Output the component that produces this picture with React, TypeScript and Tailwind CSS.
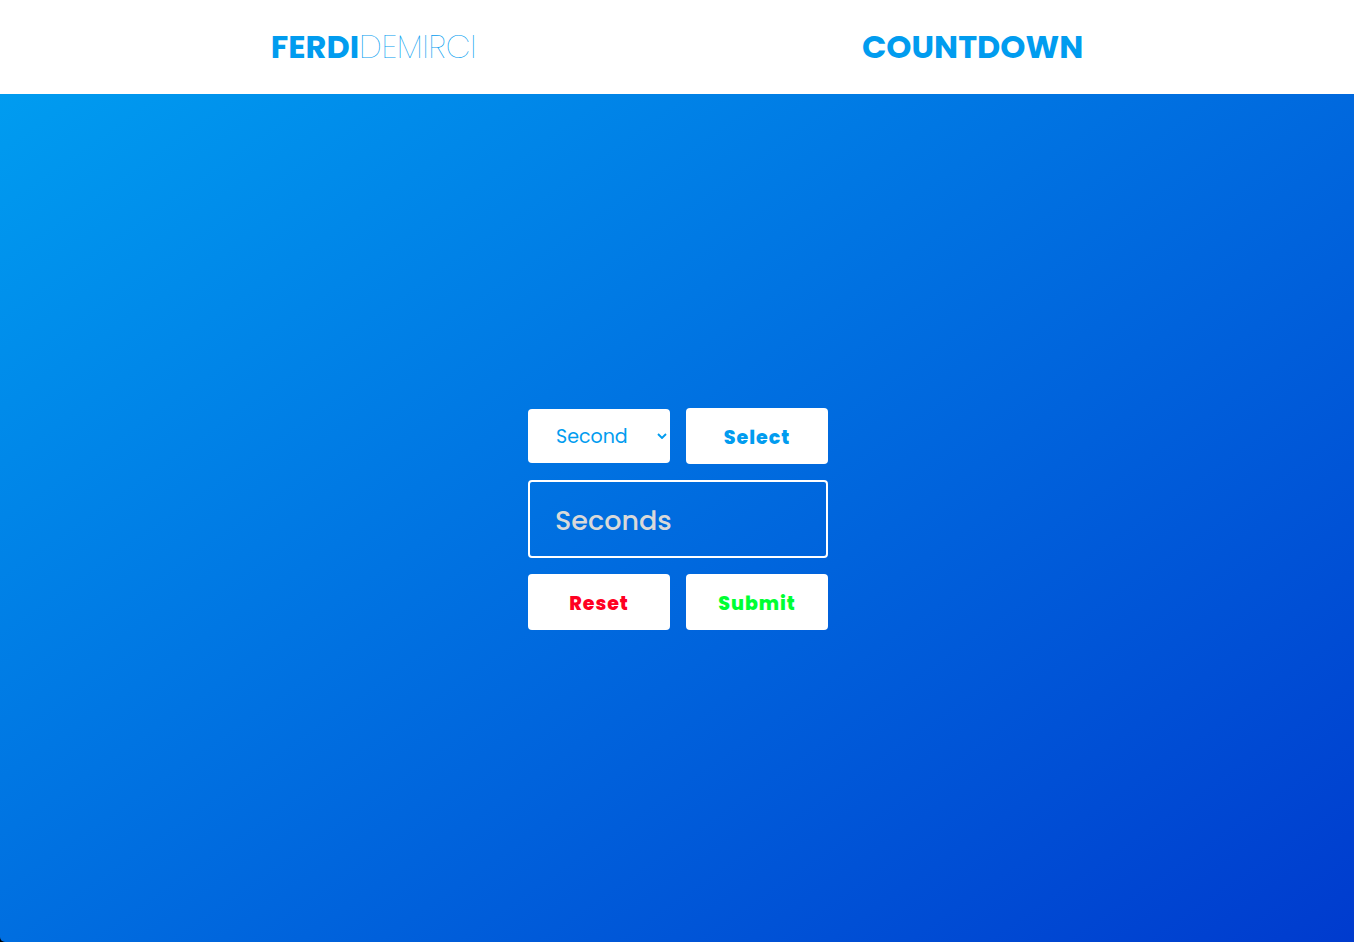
import React, { useState } from "react";

const units = ["Second", "Minute", "Hour"];

export default function App() {
  const [unit, setUnit] = useState("Second");
  const [value, setValue] = useState("");

  return (
    <div className="flex min-h-screen flex-col bg-black font-['Poppins','Inter',sans-serif]">
      <header className="flex h-[94px] items-center justify-between bg-white px-[20%] text-[32px] leading-[48px] text-[#019cef]">
        <a href="#" className="font-extralight">
          <strong className="font-bold">FERDI</strong>DEMIRCI
        </a>
        <h1 className="font-bold">COUNTDOWN</h1>
      </header>
      <main className="flex flex-1 items-center justify-center rounded-bl-[5px] bg-[linear-gradient(145deg,#009cf0,#003bce)] pt-0.5 pl-0.5">
        <form
          className="grid w-[300px] grid-cols-2 gap-4 text-[19px]"
          onSubmit={(event) => event.preventDefault()}
          onReset={() => setValue("")}
        >
          <div className="relative flex items-center">
            <select
              aria-label="Unit"
              value={unit}
              onChange={(event) => setUnit(event.target.value)}
              className="h-[54px] w-full appearance-none rounded-[4px] bg-white pt-0.5 pl-7 text-[#019cef]"
            >
              {units.map((name) => (
                <option key={name}>{name}</option>
              ))}
            </select>
            <svg
              aria-hidden="true"
              viewBox="0 0 10 6"
              className="pointer-events-none absolute right-[3px] h-[6px] w-[10px] text-[#019cef]"
            >
              <path d="M1 1l4 4 4-4" fill="none" stroke="currentColor" strokeWidth="1.9" />
            </svg>
          </div>
          <button type="button" className="h-14 rounded-[4px] bg-white pt-1 font-extrabold tracking-wider text-[#019cef]">
            Select
          </button>
          <input
            aria-label={unit + "s"}
            placeholder={unit + "s"}
            value={value}
            onChange={(event) => setValue(event.target.value)}
            className="col-span-2 h-[78px] rounded-[4px] border-2 border-white bg-transparent px-[25px] pt-1 text-[27px] font-medium text-white placeholder:text-[#d9d9d9]"
          />
          <button type="reset" className="h-14 rounded-[4px] bg-white pt-1 font-extrabold tracking-wider text-[#ff0022]">
            Reset
          </button>
          <button type="submit" className="h-14 rounded-[4px] bg-white pt-1 font-extrabold tracking-wider text-[#00ff33]">
            Submit
          </button>
        </form>
      </main>
    </div>
  );
}
